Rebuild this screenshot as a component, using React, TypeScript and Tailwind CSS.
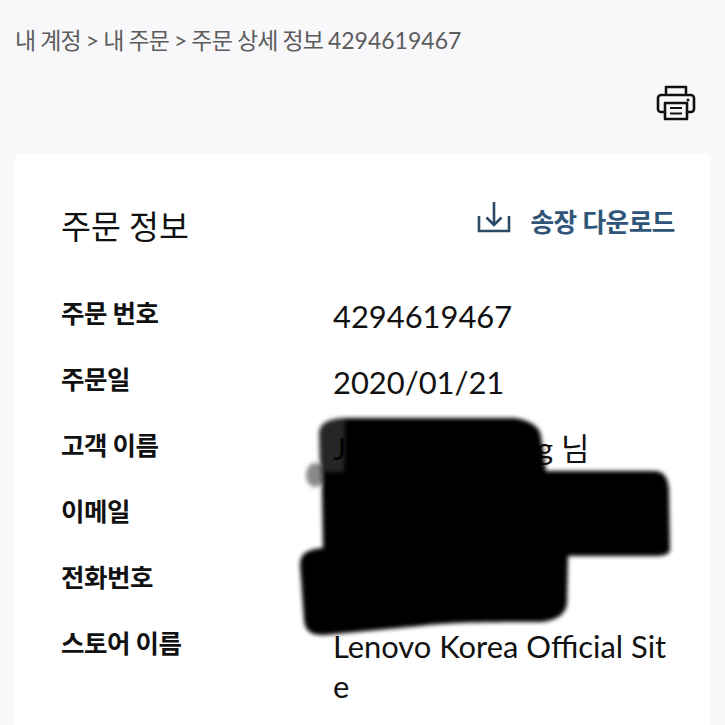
const font = "font-['Lato','Noto_Sans_CJK_KR',sans-serif]";

const rows = [
  { label: "주문 번호", value: "4294619467" },
  { label: "주문일", value: "2020/01/21" },
  { label: "고객 이름", value: "Jxxxxxxxxxxxrrg 님" },
  { label: "이메일", value: "" },
  { label: "전화번호", value: "" },
  { label: "스토어 이름", value: "Lenovo Korea Official Site" },
];

const PrinterIcon = () => (
  <svg width="40" height="36" viewBox="0 0 40 36" fill="none" stroke="#111" strokeWidth="2.6" strokeLinejoin="round">
    <path d="M10 10V2h20v8" />
    <path d="M9 27H5a3 3 0 0 1-3-3V13a3 3 0 0 1 3-3h30a3 3 0 0 1 3 3v11a3 3 0 0 1-3 3h-4" />
    <path d="M9 18h22v16H9z" />
    <path d="M14 23h12M14 28.500h12" strokeWidth="2.200" />
    <circle cx="32" cy="15" r="1.500" fill="#111" stroke="none" />
  </svg>
);

const DownloadIcon = () => (
  <svg width="34" height="34" viewBox="0 0 34 34" fill="none" stroke="#2b4a68" strokeWidth="2.600">
    <path d="M17 2v23M9.500 17.500 17 25l7.500-7.500" />
    <path d="M2 16v15h30V16" />
  </svg>
);

const Redaction = () => (
  <svg className="absolute left-0 top-0" width="725" height="725" viewBox="0 0 725 725">
    <defs>
      <filter id="soft">
        <feGaussianBlur stdDeviation="2.200" />
      </filter>
    </defs>
    <g filter="url(#soft)">
      <ellipse cx="315" cy="475" rx="9" ry="12" fill="#8a8a8a" />
      <path fill="#000" opacity="0.85" d="M319 432C320 423 330 418 345 418H360V472H320Z" />
      <path
        fill="#000"
        d="M345 418H515C528 420 540 426 541 436L546 471H655C665 472 668 478 669 490L670 550C669 556 660 556 650 556H568L567 603C566 615 555 621 540 622C500 622 450 622 420 626L325 635C310 636 305 630 304 620L300 565C300 553 308 549 323 548L322 490L321 472H344Z"
      />
    </g>
  </svg>
);

export default function App() {
  return (
    <div className={`relative h-[725px] w-[725px] overflow-hidden bg-[#f8f8fa] ${font}`}>
      <div className="px-[15px] pt-[24px] text-[23px] leading-[32px] text-[#5c5c5c]">
        <span className="tracking-[-0.9px]">내 계정 &gt; 내 주문 &gt; 주문 상세 정보 </span>
        <span>4294619467</span>
      </div>
      <div className="mt-[29px] flex justify-end pr-[29px]">
        <PrinterIcon />
      </div>
      <div className="mx-[14px] mt-[32px] h-[600px] rounded-lg bg-white pl-[47px] pr-[36px] pt-[52px]">
        <div className="flex items-center justify-between">
          <h1 className="text-[32.500px] leading-[44px] font-normal text-[#111]">주문 정보</h1>
          <div className="-mt-[10px] flex items-center gap-[19px]">
            <div className="-mt-[10px]">
              <DownloadIcon />
            </div>
            <span className="text-[25.700px] leading-[34px] font-bold tracking-[-0.5px] text-[#2f5578]">송장 다운로드</span>
          </div>
        </div>
        <div className="mt-[47px] flex flex-col">
          {rows.map((row) => (
            <div key={row.label} className="grid h-[66px] grid-cols-[272px_336px]">
              <div className="text-[25.500px] leading-[34px] font-bold tracking-[-0.5px] text-[#111]">{row.label}</div>
              <div className="mt-[1px] text-[30.900px] leading-[40px] break-all text-[#111]">{row.value}</div>
            </div>
          ))}
        </div>
      </div>
      <Redaction />
    </div>
  );
}
